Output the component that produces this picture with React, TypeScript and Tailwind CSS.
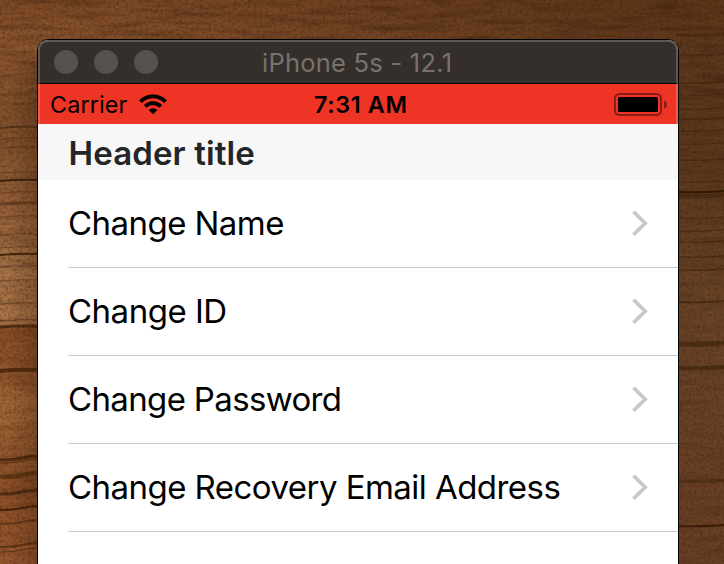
import React from "react";

const rows = [
  { label: "Change Name", tracking: "tracking-[-0.55px]" },
  { label: "Change ID", tracking: "tracking-[-0.5px]" },
  { label: "Change Password", tracking: "tracking-[-0.65px]" },
  { label: "Change Recovery Email Address", tracking: "tracking-[-0.54px]" },
];

const leftGrain: [number, number, number][] = [
  [127, 2, 0.45], [138, 1, 0.3], [147, 1, 0.25], [172, 1, 0.3], [180, 2, 0.8],
  [192, 1, 0.3], [203, 3, 0.4], [216, 1, 0.3], [234, 1, 0.3], [247, 1, 0.3],
  [254, 2, 0.8], [266, 1, 0.25], [280, 1, 0.3], [303, 1, 0.4], [320, 1, 0.4],
  [326, 3, 0.6], [370, 4, 0.6], [458, 3, 0.6], [461, 1, 0.5], [475, 4, 0.4],
  [492, 3, 0.55], [508, 2, 0.7], [522, 2, 0.4], [545, 2, 0.5], [550, 1, 0.55],
];

const rightGrain: [number, number, number][] = [
  [35, 3, 0.3], [55, 2, 0.3], [83, 1, 0.4], [95, 1, 0.3], [109, 1, 0.3],
  [119, 2, 0.4], [131, 1, 0.3], [144, 1, 0.3], [160, 1, 0.4], [182, 1, 0.3],
  [192, 2, 0.9], [196, 4, 0.4], [218, 1, 0.25], [231, 1, 0.35], [242, 1, 0.5],
  [257, 1, 0.5], [270, 1, 0.6], [302, 2, 0.45], [344, 5, 0.45], [368, 4, 0.45],
  [481, 3, 0.35], [526, 2, 0.75],
];

function Wood() {
  return (
    <svg className="absolute inset-0" width="724" height="564" viewBox="0 0 724 564">
      <defs>
        <linearGradient id="base" x1="0" y1="0" x2="0" y2="1">
          <stop offset="0" stopColor="#834e2a" />
          <stop offset="0.08" stopColor="#8c5630" />
          <stop offset="0.22" stopColor="#83522d" />
          <stop offset="0.34" stopColor="#935f38" />
          <stop offset="0.5" stopColor="#a87448" />
          <stop offset="0.575" stopColor="#ac7648" />
          <stop offset="0.58" stopColor="#8a4e26" />
          <stop offset="0.66" stopColor="#93572d" />
          <stop offset="0.72" stopColor="#a36838" />
          <stop offset="0.86" stopColor="#8f5129" />
          <stop offset="1" stopColor="#9b5a2f" />
        </linearGradient>
        <linearGradient id="right" x1="0" y1="0" x2="0" y2="1">
          <stop offset="0" stopColor="#5c381e" />
          <stop offset="0.25" stopColor="#5c391e" />
          <stop offset="0.5" stopColor="#694427" />
          <stop offset="1" stopColor="#693f25" />
        </linearGradient>
        <linearGradient id="fade" x1="0" y1="0" x2="1" y2="0">
          <stop offset="0" stopColor="#3a200b" stopOpacity="0" />
          <stop offset="0.35" stopColor="#3a200b" stopOpacity="0.2" />
          <stop offset="0.7" stopColor="#3a200b" stopOpacity="0.42" />
          <stop offset="0.92" stopColor="#3a200b" stopOpacity="0.52" />
          <stop offset="1" stopColor="#3a200b" stopOpacity="0.52" />
        </linearGradient>
        <linearGradient id="shade" x1="0" y1="0" x2="1" y2="0">
          <stop offset="0" stopColor="#1e0e03" stopOpacity="0" />
          <stop offset="1" stopColor="#1e0e03" stopOpacity="0.24" />
        </linearGradient>
        <filter id="grain" x="0" y="0" width="100%" height="100%" colorInterpolationFilters="sRGB">
          <feTurbulence type="fractalNoise" baseFrequency="0.02 0.16" numOctaves="4" seed="8" />
          <feColorMatrix values="0 0 0 0 0.18  0 0 0 0 0.08  0 0 0 0 0.02  2 0 0 0 -0.85" />
        </filter>
        <filter id="speck" x="0" y="0" width="100%" height="100%" colorInterpolationFilters="sRGB">
          <feTurbulence type="fractalNoise" baseFrequency="0.35" numOctaves="2" seed="3" />
          <feColorMatrix values="0 0 0 0 0.2  0 0 0 0 0.1  0 0 0 0 0.03  0 1.6 0 0 -0.65" />
        </filter>
        <filter id="soft" filterUnits="userSpaceOnUse" x="0" y="0" width="724" height="564">
          <feGaussianBlur stdDeviation="0.5" />
        </filter>
      </defs>
      <rect width="724" height="564" fill="url(#base)" />
      <rect width="724" height="45" fill="url(#fade)" />
      <rect x="676" y="38" width="48" height="526" fill="url(#right)" />
      <rect width="724" height="100" filter="url(#grain)" opacity="0.42" />
      <rect y="100" width="724" height="464" filter="url(#grain)" opacity="0.2" />
      <rect width="724" height="564" filter="url(#speck)" opacity="0.5" />
      <rect x="8" y="60" width="30" height="504" fill="url(#shade)" />
      <g fill="none" stroke="#2c1505" filter="url(#soft)">
        {leftGrain.map(([y, w, o]) => (
          <path key={y} d={y > 400 ? `M0 ${y + 2}Q14 ${y + 2} 22 ${y}T40 ${y - 2}` : `M0 ${y + 1}Q20 ${y - 1} 40 ${y}`} strokeWidth={w} opacity={o} />
        ))}
        {rightGrain.map(([y, w, o]) => (
          <path key={y} d={`M676 ${y}Q700 ${y + 1} 724 ${y - 1}`} strokeWidth={w} opacity={o} />
        ))}
      </g>
    </svg>
  );
}

export default function App() {
  return (
    <div className="relative h-[564px] w-[724px] overflow-hidden bg-[#7b4a26] pl-[37px] pt-[39px] font-['Inter','Liberation_Sans',sans-serif]">
      <Wood />
      <div className="relative h-[540px] w-[642px] overflow-hidden rounded-t-[11px] border border-black bg-white">
        <div className="relative flex h-11 items-center border-b border-black bg-[#352f2b] pl-4">
          <div className="flex gap-4">
            <span className="size-6 rounded-full bg-[#57514d]" />
            <span className="size-6 rounded-full bg-[#57514d]" />
            <span className="size-6 rounded-full bg-[#57514d]" />
          </div>
          <div className="flex-1 pl-[104px] pt-[2px] text-[25.5px] leading-[42px] tracking-[0.24px] whitespace-nowrap text-[#78726e]">
            iPhone 5s - 12.1
          </div>
        </div>
        <div className="flex h-10 items-center bg-[#ee3424] text-black">
          <div className="flex w-[240px] items-center pl-3">
            <span className="w-[88px] pt-[2px] text-[23.3px] leading-[38px] tracking-[0.15px]">Carrier</span>
            <svg className="mt-[1px]" width="30" height="21" viewBox="0 0 30 21">
              <g fill="none" stroke="#000" strokeWidth="3.8">
                <path d="M2.4 7.6A17.8 17.8 0 0 1 27.6 7.6" />
                <path d="M7.2 12.4A11 11 0 0 1 22.8 12.4" />
              </g>
              <path d="M15 20.2L10.7 15.9A6.1 6.1 0 0 1 19.3 15.9Z" />
            </svg>
          </div>
          <div className="flex-1 pl-[36px] pt-[2px] text-[23.3px] leading-[38px] font-semibold tracking-[0.65px] whitespace-nowrap">
            7:31 AM
          </div>
          <svg className="mr-[10px] mt-[1px]" width="54" height="24" viewBox="0 0 54 24">
            <rect x="1" y="1" width="46" height="21" rx="4.5" fill="none" stroke="#8c1d15" strokeWidth="2" />
            <rect x="4" y="4" width="40" height="15" rx="1.5" />
            <path d="M50 7.5Q53 8.5 53 11.5T50 15.5Z" fill="#8c1d15" />
          </svg>
        </div>
        <div className="h-14 bg-[#f7f7f7] pl-[30.5px] text-[33px] leading-[58px] font-semibold tracking-[0.12px] text-[#232526]">
          Header title
        </div>
        {rows.map(({ label, tracking }) => (
          <div key={label} className="ml-[30px] flex h-[88px] items-start justify-between border-b border-[#c8c7cc] pr-[29px]">
            <span className={`text-[33px] leading-[86px] whitespace-nowrap text-black ${tracking}`}>{label}</span>
            <svg className="mt-[29px]" width="18" height="28" viewBox="0 0 18 28">
              <path d="M2.4 2.6L14.2 14.2L2.4 25.8" fill="none" stroke="#c7c7cc" strokeWidth="3.7" />
            </svg>
          </div>
        ))}
        <div className="pointer-events-none absolute inset-x-0 top-0 h-[84px] rounded-t-[10px] border-x-2 border-t-2 border-white/20" />
      </div>
    </div>
  );
}
